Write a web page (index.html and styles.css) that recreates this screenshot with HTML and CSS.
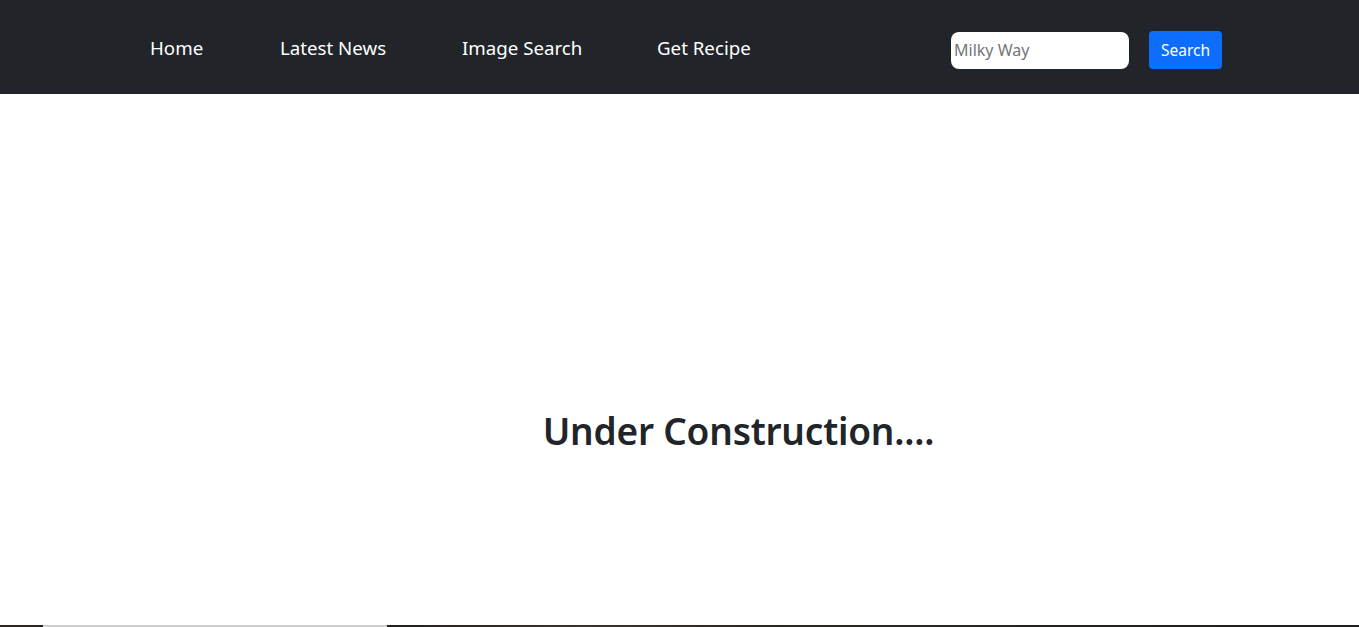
FILE: index.html
```html
<!DOCTYPE html>
<html lang="en">
<head>
<meta charset="utf-8">
<title>Under Construction</title>
<link rel="stylesheet" href="styles.css">
</head>
<body>
<nav class="navbar">
  <ul class="nav-links">
    <li><a href="#">Home</a></li>
    <li><a href="#">Latest News</a></li>
    <li><a href="#">Image Search</a></li>
    <li><a href="#">Get Recipe</a></li>
  </ul>
  <form class="search-form">
    <input class="search-input" type="text" placeholder="Milky Way">
    <button class="search-btn" type="button">Search</button>
  </form>
</nav>
<main class="content">
  <h1 class="title">Under Construction....</h1>
</main>
<footer class="footer">
  <div class="footer-left"></div>
  <div class="footer-mid"></div>
  <div class="footer-right"></div>
</footer>
</body>
</html>
```
FILE: styles.css
```css
html, body {
  margin: 0;
  padding: 0;
}
body {
  font-family: "Noto Sans", "Open Sans", sans-serif;
  background: #fff;
  color: #212529;
  height: 627px;
  overflow: hidden;
  display: flex;
  flex-direction: column;
}
.navbar {
  height: 94px;
  background: #212529;
  display: flex;
  align-items: center;
  flex-shrink: 0;
}
.nav-links {
  list-style: none;
  margin: 0 0 0 150px;
  padding: 0;
  display: grid;
  grid-template-columns: 130px 182px 195px 150px;
  align-items: center;
  margin-top: 0;
}
.nav-links a {
  color: #fff;
  text-decoration: none;
  font-size: 18.7px;
}
.search-form {
  margin-left: auto;
  margin-right: 137px;
  margin-top: 6px;
  display: flex;
  align-items: center;
  gap: 20px;
}
.search-input {
  width: 178px;
  height: 37px;
  box-sizing: border-box;
  border: none;
  border-radius: 8px;
  padding: 0 3px;
  font-family: inherit;
  font-size: 16px;
  color: #212529;
  background: #fff;
  outline: none;
}
.search-input::placeholder {
  color: #757575;
}
.search-btn {
  width: 73px;
  height: 38px;
  border: none;
  border-radius: 4px;
  background: #0d6efd;
  color: #fff;
  font-family: inherit;
  font-size: 15.5px;
  padding: 0;
}
.content {
  flex: 1;
  padding-left: 118px;
  text-align: center;
}
.title {
  margin: 315px 0 0;
  font-size: 37px;
  font-weight: 600;
  line-height: 1.2;
  letter-spacing: -0.2px;
}
.footer {
  height: 2px;
  display: flex;
  flex-shrink: 0;
}
.footer-left {
  width: 43px;
  background: #2a2520;
}
.footer-mid {
  width: 344px;
  background: #cfcfcf;
}
.footer-right {
  flex: 1;
  background: linear-gradient(90deg, #231f1c, #3a3430 20%, #2a2622 40%, #1f1f1f);
}
```
